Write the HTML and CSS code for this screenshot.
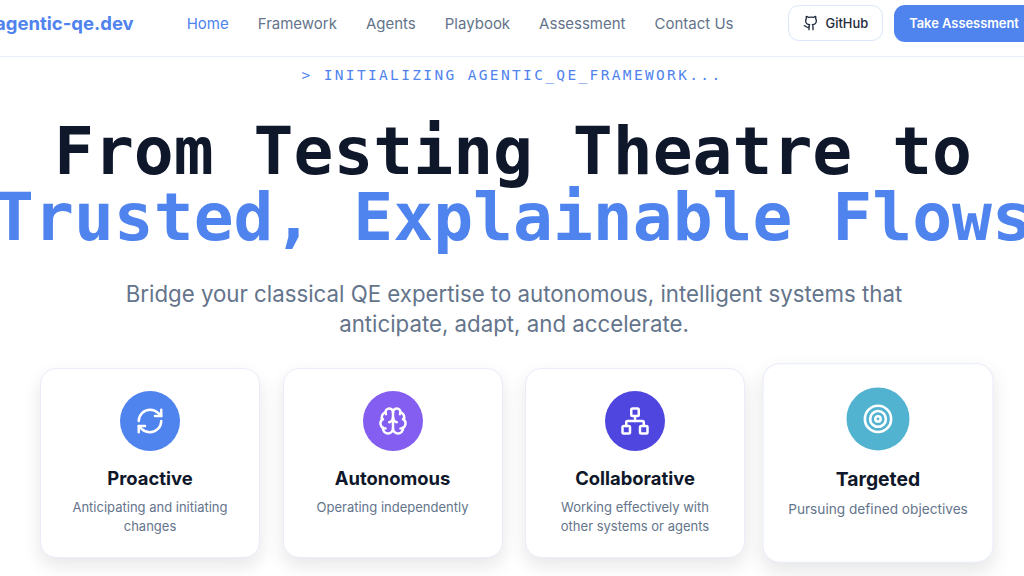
FILE: index.html
```html
<!DOCTYPE html>
<html lang="en">
<head>
    <meta charset="UTF-8">
    <meta name="viewport" content="width=device-width, initial-scale=1.0">
    <title>agentic-qe.dev</title>
    <link rel="stylesheet" href="styles.css">
</head>
<body>
    <header class="site-header">
        <a class="logo" href="#">agentic-qe.dev</a>
        <nav class="nav-links">
            <a class="nav-link active" href="#">Home</a>
            <a class="nav-link" href="#">Framework</a>
            <a class="nav-link" href="#">Agents</a>
            <a class="nav-link" href="#">Playbook</a>
            <a class="nav-link" href="#">Assessment</a>
            <a class="nav-link" href="#">Contact Us</a>
        </nav>
        <div class="nav-actions">
            <a class="btn btn-outline" href="#">
                <svg class="btn-icon" viewBox="0 0 24 24"><path d="M15 22v-4a4.8 4.8 0 0 0-1-3.5c3 0 6-2 6-5.5.08-1.25-.27-2.48-1-3.5.28-1.15.28-2.35 0-3.5 0 0-1 0-3 1.5-2.64-.5-5.36-.5-8 0C6 2 5 2 5 2c-.3 1.15-.3 2.35 0 3.5A5.403 5.403 0 0 0 4 9c0 3.5 3 5.5 6 5.5-.39.49-.68 1.05-.85 1.65-.17.6-.22 1.23-.15 1.85v4"/><path d="M9 18c-4.51 2-5-2-7-2"/></svg>
                GitHub
            </a>
            <a class="btn btn-primary" href="#">Take Assessment</a>
        </div>
    </header>

    <main class="hero">
        <p class="boot-line">&gt; INITIALIZING AGENTIC_QE_FRAMEWORK...</p>
        <h1 class="hero-title">
            <span class="title-line">From Testing Theatre to</span>
            <span class="title-line accent">Trusted, Explainable Flows</span>
        </h1>
        <p class="hero-sub">Bridge your classical QE expertise to autonomous, intelligent systems that<br>anticipate, adapt, and accelerate.</p>

        <section class="cards">
            <article class="card">
                <div class="card-icon icon-blue">
                    <svg viewBox="0 0 24 24"><path d="M3 12a9 9 0 0 1 9-9 9.75 9.75 0 0 1 6.74 2.74L21 8"/><path d="M21 3v5h-5"/><path d="M21 12a9 9 0 0 1-9 9 9.75 9.75 0 0 1-6.74-2.74L3 16"/><path d="M8 16H3v5"/></svg>
                </div>
                <h3>Proactive</h3>
                <p>Anticipating and initiating changes</p>
            </article>
            <article class="card">
                <div class="card-icon icon-purple">
                    <svg viewBox="0 0 24 24"><path d="M12 18V5"/><path d="M15 13a4.17 4.17 0 0 1-3-4 4.17 4.17 0 0 1-3 4"/><path d="M17.598 6.5A3 3 0 1 0 12 5a3 3 0 1 0-5.598 1.5"/><path d="M17.997 5.125a4 4 0 0 1 2.526 5.77"/><path d="M18 18a4 4 0 0 0 2-7.464"/><path d="M19.967 17.483A4 4 0 1 1 12 18a4 4 0 1 1-7.967-.517"/><path d="M6 18a4 4 0 0 1-2-7.464"/><path d="M6.003 5.125a4 4 0 0 0-2.526 5.77"/></svg>
                </div>
                <h3>Autonomous</h3>
                <p>Operating independently</p>
            </article>
            <article class="card">
                <div class="card-icon icon-indigo">
                    <svg viewBox="0 0 24 24"><rect x="16" y="16" width="6" height="6" rx="1"/><rect x="2" y="16" width="6" height="6" rx="1"/><rect x="9" y="2" width="6" height="6" rx="1"/><path d="M5 16v-3a1 1 0 0 1 1-1h12a1 1 0 0 1 1 1v3"/><path d="M12 12V8"/></svg>
                </div>
                <h3>Collaborative</h3>
                <p>Working effectively with other systems or agents</p>
            </article>
            <article class="card card-raised">
                <div class="card-icon icon-teal">
                    <svg viewBox="0 0 24 24"><circle cx="12" cy="12" r="10"/><circle cx="12" cy="12" r="6"/><circle cx="12" cy="12" r="2"/></svg>
                </div>
                <h3>Targeted</h3>
                <p>Pursuing defined objectives</p>
            </article>
        </section>
    </main>
</body>
</html>
```

FILE: styles.css
```css
html, body {
    margin: 0;
    padding: 0;
    height: 576px;
    overflow: hidden;
}

body {
    font-family: "Inter", sans-serif;
    background-color: #fff;
    color: #0f172a;
}

a {
    text-decoration: none;
}

/* Header runs wider than the window, so it is centred and clipped */
.site-header {
    display: flex;
    justify-content: center;
    align-items: center;
    height: 46px;
    padding: 0 0 10px 5px;
    border-bottom: 1.5px solid #e8effb;
    white-space: nowrap;
}

.logo {
    flex-shrink: 0;
    font-size: 18.5px;
    font-weight: 700;
    color: #4f83ee;
}

.nav-links {
    display: flex;
    flex-shrink: 0;
    gap: 29px;
    margin: 0 54px 0 53px;
}

.nav-link {
    font-size: 15px;
    color: #64748b;
}

.nav-link.active {
    color: #4f83ee;
}

.nav-actions {
    display: flex;
    flex-shrink: 0;
    align-items: center;
    gap: 11px;
}

.btn {
    display: flex;
    align-items: center;
    box-sizing: border-box;
    font-size: 12.9px;
    font-weight: 500;
    border-radius: 11px;
}

.btn-outline {
    gap: 7px;
    height: 36px;
    padding: 0 14px;
    color: #1e293b;
    background: #fff;
    border: 1.5px solid #dbe6fb;
}

.btn-icon {
    width: 16px;
    height: 16px;
    fill: none;
    stroke: #1e293b;
    stroke-width: 2;
    stroke-linecap: round;
    stroke-linejoin: round;
}

.btn-primary {
    height: 37px;
    padding: 0 15px;
    color: #fff;
    font-weight: 600;
    background: #4f83ee;
}

.hero {
    text-align: center;
}

.boot-line {
    margin: 10px 0 0;
    font-family: "DejaVu Sans Mono", monospace;
    font-size: 14.5px;
    line-height: 17px;
    letter-spacing: 2.35px;
    color: #4f83ee;
}

.hero-title {
    margin: 34px 0 0;
    padding-left: 2px;
    font-family: "DejaVu Sans Mono", monospace;
    font-size: 66.3px;
    font-weight: 700;
    line-height: 66px;
    white-space: nowrap;
    color: #0f172a;
}

/* Second line is wider than the window too */
.title-line {
    display: flex;
    justify-content: center;
}

.title-line.accent {
    color: #4f83ee;
}

.hero-sub {
    margin: 29px 0 0;
    padding-left: 4px;
    font-size: 22.25px;
    line-height: 30px;
    color: #64748b;
}

.cards {
    display: grid;
    grid-template-columns: repeat(4, 220px);
    gap: 22.5px;
    margin: 29px 0 0 40px;
    align-items: start;
}

.card {
    box-sizing: border-box;
    height: 190px;
    padding: 22px 20px 0;
    background: #fff;
    border: 1px solid #e8edf7;
    border-radius: 16px;
    box-shadow: 0 8px 18px rgba(15, 23, 42, 0.1);
}

.card-raised {
    transform: scale(1.05);
}

.card-icon {
    display: flex;
    justify-content: center;
    align-items: center;
    width: 60px;
    height: 60px;
    margin: 0 auto 15px;
    border-radius: 50%;
}

.card-icon svg {
    width: 30px;
    height: 30px;
    fill: none;
    stroke: #fff;
    stroke-width: 2;
    stroke-linecap: round;
    stroke-linejoin: round;
}

.icon-blue { background-color: #4f83ee; }
.icon-purple { background-color: #845ef0; }
.icon-indigo { background-color: #4f46df; }
.icon-teal { background-color: #52b3d0; }

.card h3 {
    margin: 0;
    font-size: 18.4px;
    font-weight: 700;
    line-height: 24px;
    color: #0f172a;
}

.card p {
    margin: 8px 0 0;
    font-size: 13px;
    line-height: 19px;
    color: #64748b;
}
```
